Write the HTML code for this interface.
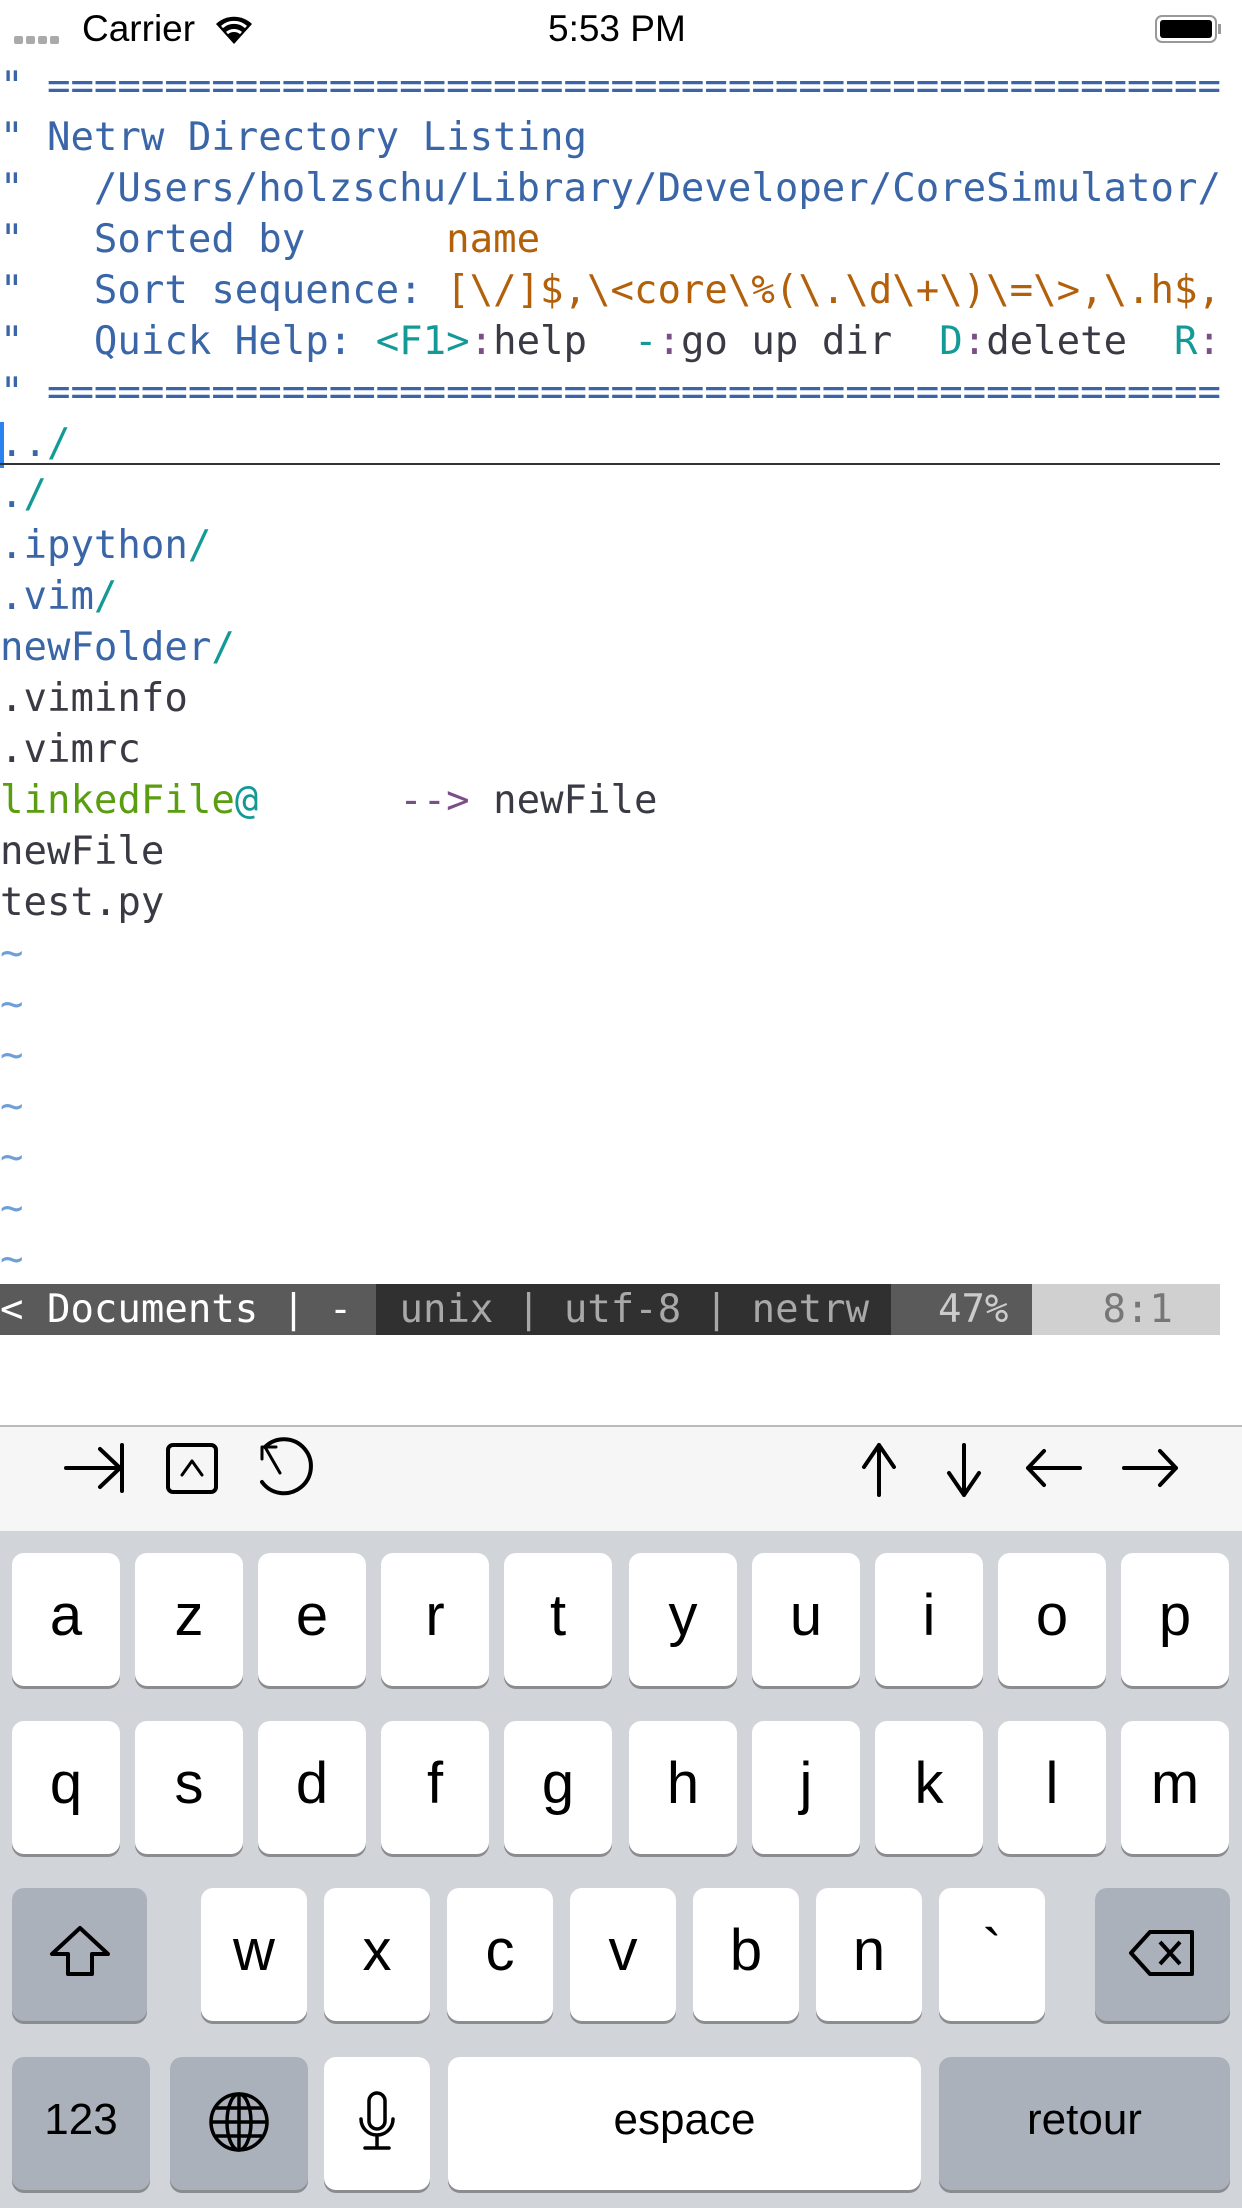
<!DOCTYPE html>
<html><head><meta charset="utf-8"><style>
*{margin:0;padding:0;box-sizing:border-box}
body{width:1242px;height:2208px;background:#fff;position:relative;overflow:hidden;font-family:"Liberation Sans",sans-serif}
.sb{position:absolute;top:0;left:0;width:1242px;height:60px;font-size:37px;color:#000}
.term{position:absolute;top:61px;left:0;width:1220px;overflow:hidden;font-family:"DejaVu Sans Mono","Liberation Mono",monospace;font-size:39px;line-height:51px;color:#3a3a44}
.term div{height:51px;white-space:pre}
.c{color:#3a66a8}.o{color:#b3600a}.t{color:#139a96}.p{color:#7a4f87}.g{color:#5a9e10}.d{color:#3a3a44}.tl{color:#6e9fd8}
.stl{position:absolute;top:1284px;left:0;height:51px;font-family:"DejaVu Sans Mono","Liberation Mono",monospace;font-size:39px;line-height:51px;white-space:pre}
.stl span{float:left;height:51px}
.tb{position:absolute;top:1425px;left:0;width:1242px;height:106px;background:#f6f6f6;border-top:2px solid #bbb}
.kb{position:absolute;top:1531px;left:0;width:1242px;height:677px;background:#d1d4d9}
.k{position:absolute;height:133px;background:#fff;border-radius:12px;box-shadow:0 3px 0 #8a8c90;font-size:58px;text-align:center;line-height:125px;color:#000}
.s{background:#abb1bb}
</style></head><body>
<div class="sb">
<div style="position:absolute;left:14px;top:36px;width:50px;height:8px;display:flex;gap:3px"><i style="width:9px;height:8px;background:#aaa;border-radius:2px"></i><i style="width:9px;height:8px;background:#aaa;border-radius:2px"></i><i style="width:9px;height:8px;background:#aaa;border-radius:2px"></i><i style="width:9px;height:8px;background:#aaa;border-radius:2px"></i></div>
<div style="position:absolute;left:82px;top:8px">Carrier</div>
<svg style="position:absolute;left:214px;top:14px" width="40" height="32" viewBox="0 0 40 32"><path d="M20 30 L2 10 A26 26 0 0 1 38 10 Z" fill="#000"/><path d="M8 13 A18 18 0 0 1 32 13" stroke="#fff" stroke-width="3" fill="none"/><path d="M13 19 A11 11 0 0 1 27 19" stroke="#fff" stroke-width="3" fill="none"/></svg>
<div style="position:absolute;left:548px;top:8px">5:53 PM</div>
<div style="position:absolute;left:1155px;top:15px;width:62px;height:28px;border:2px solid #999;border-radius:7px;padding:3px"><div style="width:100%;height:100%;background:#000;border-radius:3px"></div></div>
<div style="position:absolute;left:1218px;top:24px;width:3px;height:10px;background:#999"></div>
</div>
<div class="term"><div class="c">" ==================================================</div><div class="c">" Netrw Directory Listing</div><div class="c">"   /Users/holzschu/Library/Developer/CoreSimulator/</div><div><span class="c">"   Sorted by      </span><span class="o">name</span></div><div><span class="c">"   Sort sequence: </span><span class="o">[\/]$,\&lt;core\%(\.\d\+\)\=\&gt;,\.h$,</span></div><div><span class="c">"   Quick Help: </span><span class="t">&lt;F1&gt;</span><span class="p">:</span>help  <span class="t">-</span><span class="p">:</span>go up dir  <span class="t">D</span><span class="p">:</span>delete  <span class="t">R</span><span class="p">:</span></div><div class="c">" ==================================================</div><div style="position:relative"><span class="c">..</span><span class="t">/</span><i style="position:absolute;left:0;top:4px;width:4px;height:46px;background:#2a82f0"></i><i style="position:absolute;left:0;top:45px;width:1220px;height:2px;background:#333"></i></div><div><span class="c">.</span><span class="t">/</span></div><div><span class="c">.ipython</span><span class="t">/</span></div><div><span class="c">.vim</span><span class="t">/</span></div><div><span class="c">newFolder</span><span class="t">/</span></div><div>.viminfo</div><div>.vimrc</div><div><span class="g">linkedFile</span><span class="t">@</span>      <span class="p">--&gt;</span> newFile</div><div>newFile</div><div>test.py</div><div class="tl">~</div><div class="tl">~</div><div class="tl">~</div><div class="tl">~</div><div class="tl">~</div><div class="tl">~</div><div class="tl">~</div></div>
<div class="stl"><span style="width:376px;background:#5a5a5a;color:#fff">&lt; Documents | - </span><span style="width:515px;background:#303030;color:#a8a8a8"> unix | utf-8 | netrw </span><span style="width:141px;background:#5a5a5a;color:#ccc">  47%</span><span style="width:188px;background:#d0d0d0;color:#777">   8:1  </span></div>
<div class="tb">
<svg width="1242" height="104" viewBox="0 0 1242 104" fill="none" stroke="#000" stroke-width="4" stroke-linecap="round" stroke-linejoin="round">
<path d="M66 41 H120 M100 22 L120 41 L100 60 M122 18 V64"/>
<rect x="168" y="18" width="48" height="47" rx="5"/><path d="M182 48 L192 34 L202 48" stroke-width="3"/>
<path d="M265 20 A27 27 0 1 1 262 55" /><path d="M265 20 L280 46 M262 20 H276 M262 20 V32" stroke-width="3"/>
<path d="M879 18 V68 M864 40 L879 18 L894 40"/>
<path d="M964 18 V68 M949 46 L964 68 L979 46"/>
<path d="M1028 41 H1080 M1044 24 L1028 41 L1044 58"/>
<path d="M1124 41 H1176 M1160 24 L1176 41 L1160 58"/>
</svg>
</div>
<div class="kb"></div>
<div class="k" style="left:12px;top:1553px;width:108px">a</div>
<div class="k" style="left:135px;top:1553px;width:108px">z</div>
<div class="k" style="left:258px;top:1553px;width:108px">e</div>
<div class="k" style="left:381px;top:1553px;width:108px">r</div>
<div class="k" style="left:504px;top:1553px;width:108px">t</div>
<div class="k" style="left:629px;top:1553px;width:108px">y</div>
<div class="k" style="left:752px;top:1553px;width:108px">u</div>
<div class="k" style="left:875px;top:1553px;width:108px">i</div>
<div class="k" style="left:998px;top:1553px;width:108px">o</div>
<div class="k" style="left:1121px;top:1553px;width:108px">p</div>
<div class="k" style="left:12px;top:1721px;width:108px">q</div>
<div class="k" style="left:135px;top:1721px;width:108px">s</div>
<div class="k" style="left:258px;top:1721px;width:108px">d</div>
<div class="k" style="left:381px;top:1721px;width:108px">f</div>
<div class="k" style="left:504px;top:1721px;width:108px">g</div>
<div class="k" style="left:629px;top:1721px;width:108px">h</div>
<div class="k" style="left:752px;top:1721px;width:108px">j</div>
<div class="k" style="left:875px;top:1721px;width:108px">k</div>
<div class="k" style="left:998px;top:1721px;width:108px">l</div>
<div class="k" style="left:1121px;top:1721px;width:108px">m</div>
<div class="k s" style="left:12px;top:1888px;width:135px"><svg width="64" height="56" viewBox="0 0 64 56" style="margin-top:36px" fill="none" stroke="#000" stroke-width="4" stroke-linejoin="round"><path d="M32 4 L4 30 H20 V50 H44 V30 H60 Z"/></svg></div>
<div class="k" style="left:201px;top:1888px;width:106px">w</div>
<div class="k" style="left:324px;top:1888px;width:106px">x</div>
<div class="k" style="left:447px;top:1888px;width:106px">c</div>
<div class="k" style="left:570px;top:1888px;width:106px">v</div>
<div class="k" style="left:693px;top:1888px;width:106px">b</div>
<div class="k" style="left:816px;top:1888px;width:106px">n</div>
<div class="k" style="left:939px;top:1888px;width:106px">`</div>
<div class="k s" style="left:1095px;top:1888px;width:135px"><svg width="70" height="50" viewBox="0 0 70 50" style="margin-top:40px" fill="none" stroke="#000" stroke-width="4" stroke-linejoin="round"><path d="M22 4 H64 V46 H22 L3 25 Z M32 14 L52 36 M52 14 L32 36"/></svg></div>
<div class="k s" style="left:12px;top:2057px;width:138px;font-size:44px">123</div>
<div class="k s" style="left:170px;top:2057px;width:138px"><svg width="62" height="62" viewBox="0 0 62 62" style="margin-top:34px" fill="none" stroke="#000" stroke-width="3.5"><circle cx="31" cy="31" r="28"/><ellipse cx="31" cy="31" rx="12" ry="28"/><path d="M31 3 V59 M3 31 H59 M8 17 H54 M8 45 H54"/></svg></div>
<div class="k" style="left:324px;top:2057px;width:106px"><svg width="40" height="62" viewBox="0 0 40 62" style="margin-top:34px" fill="none" stroke="#000" stroke-width="3.5" stroke-linecap="round"><rect x="12" y="2" width="16" height="36" rx="8"/><path d="M4 28 A16 16 0 0 0 36 28 M20 44 V56 M8 57 H32"/></svg></div>
<div class="k" style="left:448px;top:2057px;width:473px;font-size:44px">espace</div>
<div class="k s" style="left:939px;top:2057px;width:291px;font-size:44px">retour</div>
</body></html>
